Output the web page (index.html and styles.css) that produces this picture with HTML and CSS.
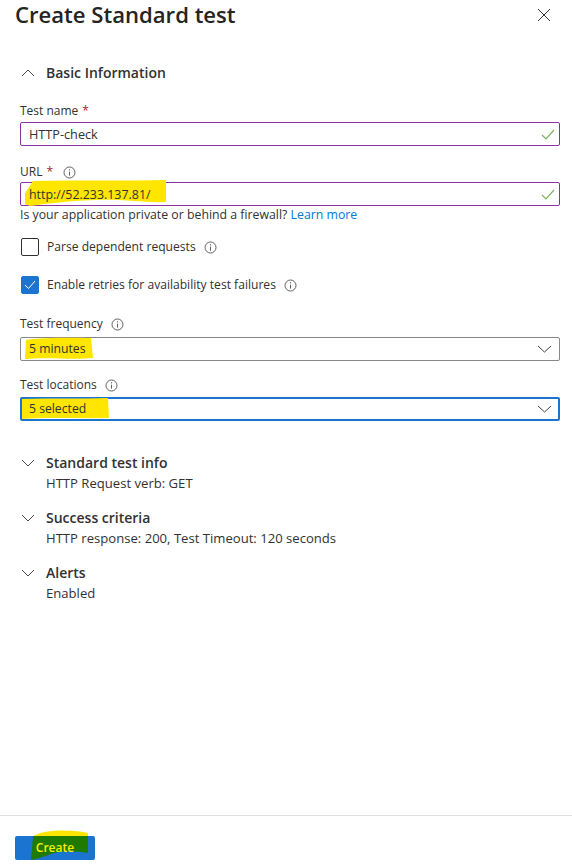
FILE: index.html
```html
<!DOCTYPE html>
<html lang="en">
<head>
    <meta charset="UTF-8">
    <meta name="viewport" content="width=device-width, initial-scale=1.0">
    <title>Create Standard test</title>
    <link rel="stylesheet" href="styles.css">
</head>
<body>
    <div class="panel">
        <div class="panel-header">
            <h1>Create Standard test</h1>
            <svg class="close-icon" width="14" height="14" viewBox="0 0 14 14"><path d="M1 1l12 12M13 1L1 13"/></svg>
        </div>

        <div class="panel-body">
            <div class="section-head first">
                <svg class="chevron" width="14" height="8" viewBox="0 0 14 8"><path d="M1 7l6-6 6 6"/></svg>
                <h2>Basic Information</h2>
            </div>

            <label class="field-label name-label">Test name <span class="req">*</span></label>
            <div class="input valid name-input">
                <span>HTTP-check</span>
                <svg class="check" width="14" height="11" viewBox="0 0 14 11"><path d="M1 6l4 4 8-9"/></svg>
            </div>

            <label class="field-label url-label">URL <span class="req">*</span>
                <svg class="info" width="13" height="13" viewBox="0 0 13 13"><circle cx="6.5" cy="6.5" r="5.5"/><path d="M6.5 5.7v4M6.5 3.2v1.2"/></svg>
            </label>
            <div class="input valid url-input">
                <span class="marked">
                    <svg class="marker url-marker" width="141" height="26" viewBox="0 0 141 26"><path d="M0 13L8 1C50 0 100 1 141 0V22C120 23 100 19 70 20C40 21 20 24 5 26L0 24Z"/></svg>
                    <span class="marked-text">http://52.233.137.81/</span>
                </span>
                <svg class="check" width="14" height="11" viewBox="0 0 14 11"><path d="M1 6l4 4 8-9"/></svg>
            </div>
            <p class="help">Is your application private or behind a firewall? <a href="#">Learn more</a></p>

            <div class="check-row parse-row">
                <span class="box"></span>
                <span>Parse dependent requests</span>
                <svg class="info" width="13" height="13" viewBox="0 0 13 13"><circle cx="6.5" cy="6.5" r="5.5"/><path d="M6.5 5.7v4M6.5 3.2v1.2"/></svg>
            </div>
            <div class="check-row retry-row">
                <span class="box checked">
                    <svg width="12" height="10" viewBox="0 0 12 10"><path d="M1 5l3.5 3.5L11 1"/></svg>
                </span>
                <span>Enable retries for availability test failures</span>
                <svg class="info" width="13" height="13" viewBox="0 0 13 13"><circle cx="6.5" cy="6.5" r="5.5"/><path d="M6.5 5.7v4M6.5 3.2v1.2"/></svg>
            </div>

            <label class="field-label freq-label">Test frequency
                <svg class="info" width="13" height="13" viewBox="0 0 13 13"><circle cx="6.5" cy="6.5" r="5.5"/><path d="M6.5 5.7v4M6.5 3.2v1.2"/></svg>
            </label>
            <div class="input select">
                <span class="marked">
                    <svg class="marker freq-marker" width="68" height="23" viewBox="0 0 68 23"><path d="M1 3C20 0 50 1 66 1L68 21C50 23 20 20 0 22Z"/></svg>
                    <span class="marked-text">5 minutes</span>
                </span>
                <svg class="caret" width="15" height="8" viewBox="0 0 15 8"><path d="M1 1l6.5 6L14 1"/></svg>
            </div>

            <label class="field-label loc-label">Test locations
                <svg class="info" width="13" height="13" viewBox="0 0 13 13"><circle cx="6.5" cy="6.5" r="5.5"/><path d="M6.5 5.7v4M6.5 3.2v1.2"/></svg>
            </label>
            <div class="input select focused">
                <span class="marked">
                    <svg class="marker loc-marker" width="87" height="21" viewBox="0 0 87 21"><path d="M0 1C30 0 60 1 86 0L87 20C60 21 30 19 0 21Z"/></svg>
                    <span class="marked-text">5 selected</span>
                </span>
                <svg class="caret" width="15" height="8" viewBox="0 0 15 8"><path d="M1 1l6.5 6L14 1"/></svg>
            </div>

            <div class="section-head info-head">
                <svg class="chevron" width="14" height="8" viewBox="0 0 14 8"><path d="M1 1l6 6 6-6"/></svg>
                <h2>Standard test info</h2>
            </div>
            <p class="summary">HTTP Request verb: GET</p>

            <div class="section-head">
                <svg class="chevron" width="14" height="8" viewBox="0 0 14 8"><path d="M1 1l6 6 6-6"/></svg>
                <h2>Success criteria</h2>
            </div>
            <p class="summary">HTTP response: 200, Test Timeout: 120 seconds</p>

            <div class="section-head">
                <svg class="chevron" width="14" height="8" viewBox="0 0 14 8"><path d="M1 1l6 6 6-6"/></svg>
                <h2>Alerts</h2>
            </div>
            <p class="summary">Enabled</p>
        </div>

        <div class="panel-footer">
            <button class="create-btn">
                <svg class="btn-marker" width="58" height="30" viewBox="0 0 58 30">
                    <path class="btn-yellow" d="M2 6C14 0 36 -1 57 3V6H2Z"/>
                    <path class="btn-green" d="M2 6H57V23C44 21 30 20 20 24C12 27 6 29 0 30Z"/>
                </svg>
                <span>Create</span>
            </button>
        </div>
    </div>
</body>
</html>
```

FILE: styles.css
```css
* {
    margin: 0;
    padding: 0;
    box-sizing: border-box;
}

body {
    background: #fff;
    color: #323130;
    font-family: 'Open Sans', 'Noto Sans', sans-serif;
    font-size: 12px;
    line-height: 20px;
}

.panel {
    height: 866px;
    display: flex;
    flex-direction: column;
}

.panel-header {
    display: flex;
    justify-content: space-between;
    align-items: center;
    height: 28px;
    padding: 0 21px 0 15px;
}

.panel-header h1 {
    font-size: 22.1px;
    font-weight: 600;
    color: #252423;
}

.close-icon {
    margin-top: 2px;
}

.close-icon path {
    fill: none;
    stroke: #323130;
    stroke-width: 1;
}

.panel-body {
    flex: 1;
    padding: 0 12px 0 20px;
}

.section-head {
    display: flex;
    align-items: center;
    gap: 11px;
    height: 20px;
    margin-top: 15px;
}

.section-head.first {
    margin-top: 35px;
}

.section-head.info-head {
    margin-top: 32px;
}

.section-head h2 {
    font-size: 14px;
    font-weight: 600;
    color: #323130;
}

.chevron {
    margin-left: 1px;
}

.chevron path,
.caret path {
    fill: none;
    stroke: #484644;
    stroke-width: 1;
}

.field-label {
    display: flex;
    align-items: center;
    gap: 4px;
    height: 20px;
}

.name-label {
    margin-top: 18px;
    margin-bottom: 1px;
}

.url-label {
    margin-top: 16px;
}

.freq-label {
    margin-top: 19px;
    margin-bottom: 3px;
}

.loc-label {
    margin-top: 14px;
    margin-bottom: 2px;
}

.field-label .info {
    margin-left: 4px;
}

.url-label .info {
    margin-left: 6px;
}

.req {
    color: #a4262c;
}

.info circle,
.info path {
    fill: none;
    stroke: #605e5c;
    stroke-width: 1;
}

.input {
    display: flex;
    justify-content: space-between;
    align-items: center;
    width: 540px;
    height: 24px;
    padding: 0 7px 0 8px;
    border: 1px solid #8a8886;
    border-radius: 2px;
    font-size: 12.2px;
}

.input.valid {
    border-color: #8c30a8;
    padding-right: 4px;
}

.url-input > span {
    padding-top: 2px;
}

.name-input {
    font-size: 12.7px;
}

.url-input {
    font-size: 12.4px;
}

.input.focused {
    border: 2px solid #1b75d0;
    padding: 0 6px 0 7px;
}

.check path {
    fill: none;
    stroke: #7ab55c;
    stroke-width: 1.2;
}

.marked {
    position: relative;
    display: block;
}

.marked-text {
    position: relative;
}

.marker {
    position: absolute;
}

.marker path {
    fill: #ffe600;
}

.url-marker {
    left: -4px;
    top: -3px;
}

.freq-marker {
    left: -4px;
    top: -2px;
}

.loc-marker {
    left: -7px;
    top: -1px;
}

.help {
    height: 20px;
    margin-top: -1px;
    font-size: 12.3px;
}

.help a {
    color: #0078d4;
    text-decoration: none;
}

.check-row {
    display: flex;
    align-items: center;
    gap: 8px;
    height: 20px;
    padding-left: 1px;
    font-size: 12.1px;
}

.parse-row {
    margin-top: 12px;
}

.retry-row {
    margin-top: 18px;
}

.box {
    display: flex;
    align-items: center;
    justify-content: center;
    width: 18px;
    height: 18px;
    border: 1px solid #323130;
    border-radius: 2px;
}

.box.checked {
    background: #1b75d0;
    border-color: #1b75d0;
}

.box.checked path {
    fill: none;
    stroke: #fff;
    stroke-width: 1;
}

.summary {
    padding-left: 26px;
    font-size: 13.1px;
}

.panel-footer {
    height: 51px;
    padding: 20px 15px 0;
    border-top: 1px solid #e1dfdd;
}

.create-btn {
    position: relative;
    display: block;
    width: 80px;
    height: 24px;
    background: #1b75d0;
    border: none;
    border-radius: 2px;
    color: #f4f000;
    font-family: inherit;
    font-size: 12px;
    font-weight: 600;
}

.create-btn span {
    position: relative;
    top: -1px;
}

.btn-marker {
    position: absolute;
    left: 16px;
    top: -6px;
}

.btn-yellow {
    fill: #ffe600;
}

.btn-green {
    fill: #1f7a00;
}
```
